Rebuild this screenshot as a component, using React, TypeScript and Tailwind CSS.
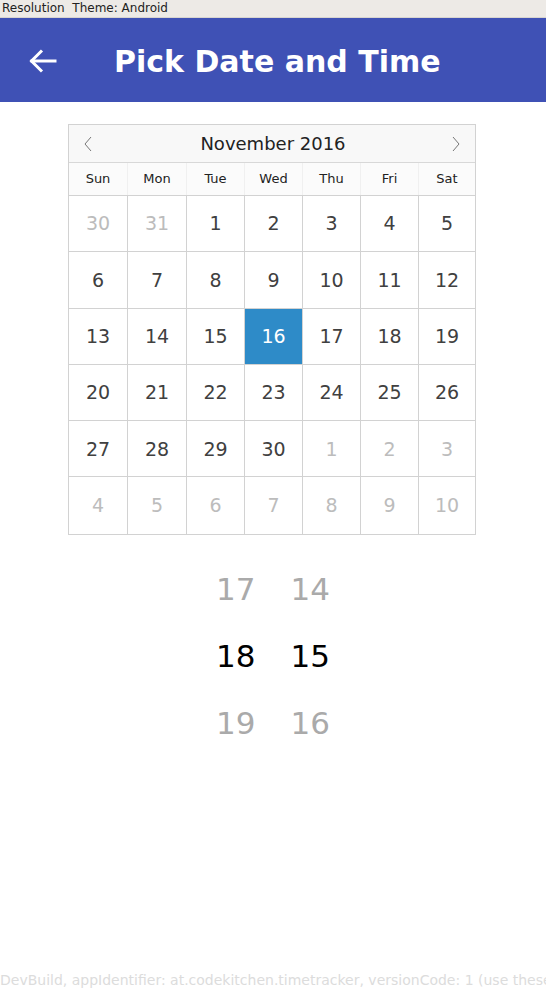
import React from "react";

const font = { fontFamily: '"DejaVu Sans", "Liberation Sans", sans-serif' };

type Cell = { d: number; muted?: boolean; sel?: boolean };

const rows: Cell[][] = [
  [{ d: 30, muted: true }, { d: 31, muted: true }, { d: 1 }, { d: 2 }, { d: 3 }, { d: 4 }, { d: 5 }],
  [{ d: 6 }, { d: 7 }, { d: 8 }, { d: 9 }, { d: 10 }, { d: 11 }, { d: 12 }],
  [{ d: 13 }, { d: 14 }, { d: 15 }, { d: 16, sel: true }, { d: 17 }, { d: 18 }, { d: 19 }],
  [{ d: 20 }, { d: 21 }, { d: 22 }, { d: 23 }, { d: 24 }, { d: 25 }, { d: 26 }],
  [{ d: 27 }, { d: 28 }, { d: 29 }, { d: 30 }, { d: 1, muted: true }, { d: 2, muted: true }, { d: 3, muted: true }],
  [4, 5, 6, 7, 8, 9, 10].map((d) => ({ d, muted: true })),
];

const days = ["Sun", "Mon", "Tue", "Wed", "Thu", "Fri", "Sat"];

export default function App() {
  return (
    <div className="w-[546px] h-[991px] bg-white relative overflow-hidden" style={font}>
      <div className="h-[18px] bg-[#edeae6] border-b border-[#d8d5d0] text-[12px] leading-[16px] text-[#222] pl-[2px] whitespace-pre">
        Resolution  Theme: Android
      </div>
      <div className="h-[84px] bg-[#3f51b5] flex items-center">
        <div className="w-[114px] flex items-center pl-[29px] pt-[2px]">
          <svg width="28" height="26" viewBox="0 0 28 26" fill="none" stroke="white" strokeWidth="3" strokeLinecap="square">
            <path d="M3 13 H26" />
            <path d="M13 2.5 L2.5 13 L13 23.5" strokeLinecap="butt" strokeLinejoin="miter" />
          </svg>
        </div>
        <div className="text-white font-bold text-[30px] leading-none pt-[3px]">Pick Date and Time</div>
      </div>

      <div className="ml-[68px] mt-[22px] w-[408px] border border-[#d2d2d2]">
        <div className="h-[38px] bg-[#f8f8f8] border-b border-[#d8d8d8] flex items-center justify-between px-[14px]">
          <svg width="10" height="16" viewBox="0 0 10 16" fill="none" stroke="#777" strokeWidth="1">
            <path d="M8 1 L2 8 L8 15" />
          </svg>
          <div className="text-[18px] text-[#222] pl-[2px]">November 2016</div>
          <svg width="10" height="16" viewBox="0 0 10 16" fill="none" stroke="#777" strokeWidth="1">
            <path d="M2 1 L8 8 L2 15" />
          </svg>
        </div>
        <div className="grid grid-cols-[59px_59px_58px_58px_58px_58px_1fr] h-[33px] bg-[#fbfbfb] border-b border-[#d2d2d2]">
          {days.map((d, i) => (
            <div
              key={d}
              className={`flex items-center justify-center text-[13px] text-[#222] ${i < 6 ? "border-r border-[#f0f0f0]" : ""}`}
            >
              {d}
            </div>
          ))}
        </div>
        {rows.map((r, ri) => (
          <div
            key={ri}
            className={`grid grid-cols-[59px_59px_58px_58px_58px_58px_1fr] h-[56.3px] ${ri < 5 ? "border-b border-[#d2d2d2]" : ""}`}
          >
            {r.map((c, ci) => (
              <div
                key={ci}
                className={`flex items-center justify-center text-[19px] ${ci < 6 ? "border-r border-[#d2d2d2]" : ""} ${
                  c.sel ? "bg-[#2e8bc8] text-white" : c.muted ? "text-[#bcbcbc]" : "text-[#404040]"
                }`}
              >
                {c.d}
              </div>
            ))}
          </div>
        ))}
      </div>

      <div className="mt-[21px] flex justify-center">
        <div className="flex gap-[35px] pl-[0px]">
          {[
            ["17", "18", "19"],
            ["14", "15", "16"],
          ].map((col, i) => (
            <div key={i} className="flex flex-col items-center">
              {col.map((v, j) => (
                <div
                  key={v}
                  className={`h-[67px] flex items-center text-[31px] ${j === 1 ? "text-black" : "text-[#aaaaaa]"}`}
                >
                  {v}
                </div>
              ))}
            </div>
          ))}
        </div>
      </div>

      <div className="absolute left-0 bottom-0 w-[546px] h-[20px] overflow-hidden whitespace-nowrap text-[14px] leading-[18px] text-[#dcdcdc]">
        DevBuild, appIdentifier: at.codekitchen.timetracker, versionCode: 1 (use these values for support)
      </div>
    </div>
  );
}
